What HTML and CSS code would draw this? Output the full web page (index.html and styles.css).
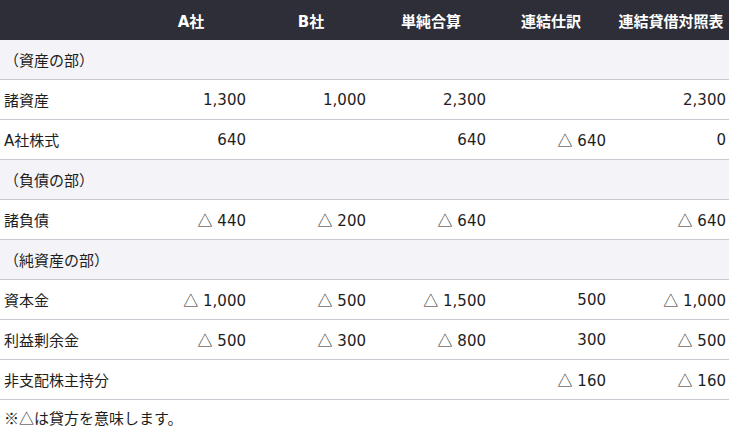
FILE: index.html
```html
<!DOCTYPE html>
<html lang="ja">
<head>
<meta charset="utf-8">
<link rel="stylesheet" href="styles.css">
</head>
<body>
<table class="bs">
  <colgroup>
    <col class="c-label">
    <col class="c-num"><col class="c-num"><col class="c-num"><col class="c-num"><col class="c-num">
  </colgroup>
  <thead>
    <tr>
      <th></th>
      <th>A社</th>
      <th>B社</th>
      <th>単純合算</th>
      <th>連結仕訳</th>
      <th>連結貸借対照表</th>
    </tr>
  </thead>
  <tbody>
    <tr class="section"><td colspan="6">（資産の部）</td></tr>
    <tr><td>諸資産</td><td>1,300</td><td>1,000</td><td>2,300</td><td></td><td>2,300</td></tr>
    <tr><td>A社株式</td><td>640</td><td></td><td>640</td><td><span class="tri">△</span> 640</td><td>0</td></tr>
    <tr class="section"><td colspan="6">（負債の部）</td></tr>
    <tr><td>諸負債</td><td><span class="tri">△</span> 440</td><td><span class="tri">△</span> 200</td><td><span class="tri">△</span> 640</td><td></td><td><span class="tri">△</span> 640</td></tr>
    <tr class="section"><td colspan="6">（純資産の部）</td></tr>
    <tr><td>資本金</td><td><span class="tri">△</span> 1,000</td><td><span class="tri">△</span> 500</td><td><span class="tri">△</span> 1,500</td><td>500</td><td><span class="tri">△</span> 1,000</td></tr>
    <tr><td>利益剰余金</td><td><span class="tri">△</span> 500</td><td><span class="tri">△</span> 300</td><td><span class="tri">△</span> 800</td><td>300</td><td><span class="tri">△</span> 500</td></tr>
    <tr><td>非支配株主持分</td><td></td><td></td><td></td><td><span class="tri">△</span> 160</td><td><span class="tri">△</span> 160</td></tr>
  </tbody>
</table>
<p class="note"><span class="tri">※△</span>は貸方を意味します。</p>
</body>
</html>
```

FILE: styles.css
```css
html, body {
  margin: 0;
  padding: 0;
  background: #ffffff;
}
body {
  font-family: "DejaVu Sans", "Noto Sans CJK JP", sans-serif;
  font-size: 15px;
  color: #1e1e1e;
}
.bs {
  width: 729px;
  border-collapse: collapse;
  table-layout: fixed;
}
.c-label { width: 129px; }
.c-num { width: 120px; }
.bs th {
  height: 40px;
  padding: 0 1px 0 5px;
  background: #2d2e37;
  color: #ffffff;
  font-weight: bold;
  text-align: center;
  vertical-align: middle;
  white-space: nowrap;
}
.bs td {
  height: 39px;
  padding: 0 3px 0 4px;
  border-bottom: 1px solid #c9c9d1;
  text-align: right;
  vertical-align: middle;
  white-space: nowrap;
}
.bs td:first-child { text-align: left; }
.bs tr.section td {
  background: #f4f4f8;
  text-align: left;
}
.tri {
  font-family: "Noto Sans CJK JP", sans-serif;
}
.note {
  margin: 0;
  padding: 6px 4px 0;
  line-height: 24px;
}
```
